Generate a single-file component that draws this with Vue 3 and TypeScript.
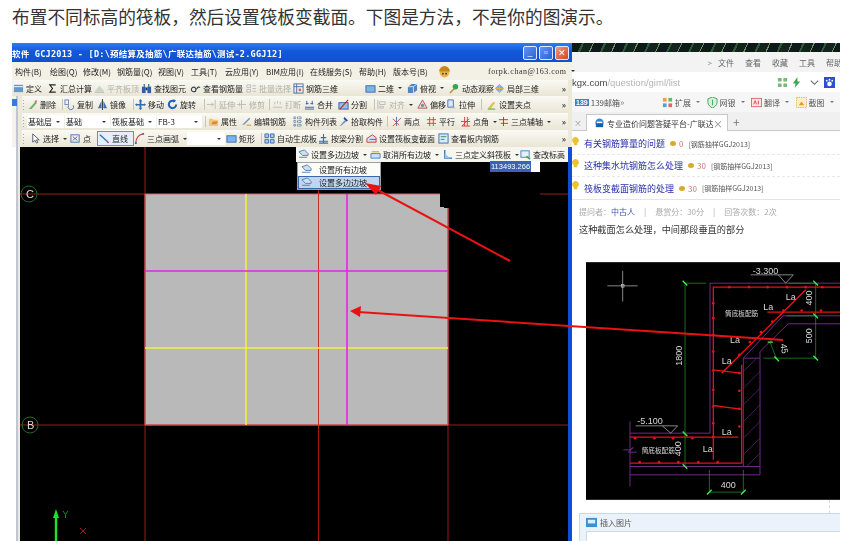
<template>
  <div class="page">
    <p class="headline">布置不同标高的筏板，然后设置筏板变截面。下图是方法，不是你的图演示。</p>

    <div class="shot">
      <!-- left: the GGJ window -->
      <div class="app-win">
        <span class="pane-tab" />
        <div class="title-bar">
          <span class="title-text">软件 GCJ2013 - [D:\预结算及抽筋\广联达抽筋\测试-2.GGJ12]</span>
          <div class="win-btns">
            <span class="win-btn">_</span>
            <span class="win-btn">▫</span>
            <span class="win-btn close">✕</span>
          </div>
        </div>

        <div class="menu-bar">
          <span v-for="m in menus" :key="m.t" class="menu-item" :style="{ width: m.w + 'px' }">{{ m.t }}</span>
          <svg class="helmet" viewBox="0 0 12 12"><circle cx="6" cy="7" r="4.5" fill="#e9b44c" /><path d="M1 6a5 5 0 0 1 10 0z" fill="#c7861c" /><circle cx="4.5" cy="8" r=".8" fill="#333" /><circle cx="7.5" cy="8" r=".8" fill="#333" /></svg>
          <span class="account">forpk.chan@163.com</span>
          <i class="caret" />
        </div>

        <div v-for="(row, r) in toolbars" :key="r" class="tb-row" :class="{ first: r === 0 }">
          <template v-for="(it, i) in row" :key="i">
            <span v-if="it.kind === 'grip'" class="grip" :style="{ width: it.w + 'px' }" />
            <span v-else-if="it.kind === 'sep'" class="sep" :style="{ width: it.w + 'px' }" />
            <span v-else-if="it.kind === 'sel'" class="sel" :style="{ width: it.w + 'px' }">
              <span class="sel-text">{{ it.t }}</span><i class="caret" />
            </span>
            <span v-else class="tb-item" :class="{ grey: it.grey, active: it.active }" :style="{ width: it.w + 'px' }">
              <svg v-if="it.i" class="ico" viewBox="0 0 12 12" v-html="icons[it.i]" />
              <span>{{ it.t }}</span>
              <i v-if="it.caret" class="caret" />
            </span>
          </template>
          <span class="more">»</span>
        </div>

        <div class="work">
          <div class="side-strip" />
          <div class="canvas">
            <svg class="cad" viewBox="20 147 548 394">
              <path d="M145 194H440V207H444V208H448V425H145Z" fill="#b9b9b9" />
              <g stroke="#a81616" stroke-width="1" fill="none">
                <path d="M20 194H145M540 194H568M20 425H568M145 147V541M318.5 147V541M448 208V541" />
              </g>
              <path d="M145 194H440M145 194V425H448V208" stroke="#e0606a" fill="none" />
              <path d="M318.5 194V425" stroke="#c8302c" fill="none" />
              <path d="M246 194V425M145 348H448" stroke="#f4ee3c" stroke-width="1.6" fill="none" />
              <path d="M347 194V425M145 271H448" stroke="#e426e0" stroke-width="1.6" fill="none" />
              <circle cx="29" cy="194" r="8" fill="none" stroke="#1d6b25" />
              <text x="26" y="198" class="axis-label">C</text>
              <circle cx="30" cy="425" r="8" fill="none" stroke="#1d6b25" />
              <text x="27" y="429" class="axis-label">B</text>
              <path d="M56 541V516" stroke="#18e52c" stroke-width="2.4" />
              <path d="M56 509L53 518H59Z" fill="#18e52c" />
              <path d="M63 511L65.500 514.500L68 511M65.500 514.500V518" stroke="#1d8a30" fill="none" />
              <path d="M80 528L86 534M86 528L80 534" stroke="#a01820" fill="none" />
            </svg>

            <!-- flyout toolbar and its menu -->
            <div class="fly-bar">
              <span v-for="f in flyItems" :key="f.t" class="tb-item" :style="{ width: f.w + 'px' }">
                <svg class="ico" viewBox="0 0 12 12" v-html="icons[f.i]" />
                <span>{{ f.t }}</span>
                <i v-if="f.caret" class="caret" />
              </span>
            </div>
            <div class="fly-menu">
              <div class="fly-opt"><svg class="ico" viewBox="0 0 12 12" v-html="icons.slope" /><span>设置所有边坡</span></div>
              <div class="fly-opt on"><svg class="ico" viewBox="0 0 12 12" v-html="icons.slope" /><span>设置多边边坡</span></div>
            </div>
            <div class="coord"><span>113493.266</span></div>
          </div>
        </div>
      </div>

      <!-- right: the browser window -->
      <div class="browser">
        <div class="wallpaper" />
        <div class="br-menu">
          <span class="chev">&gt;</span>
          <span v-for="m in browserMenu" :key="m">{{ m }}</span>
        </div>
        <div class="br-url">
          <span class="host">kgx.com</span><span class="path">/question/giml/list</span>
          <span class="url-tools">
            <svg class="ico" viewBox="0 0 12 12"><path d="M1 1h4v4H1zM7 1h4v4H7zM1 7h4v4H1zM7 7h4v4H7z" fill="#7ab77a" /></svg>
            <svg class="ico" viewBox="0 0 12 12"><path d="M7 0L2 7h3L4 12l6-7H7z" fill="#3aa655" /></svg>
            <svg class="ico wide" viewBox="0 0 12 12"><path d="M2 4l4 4 4-4" fill="none" stroke="#666" stroke-width="1.2" /></svg>
            <svg class="ico" viewBox="0 0 12 12"><rect width="12" height="12" fill="#2a4fd0" /><circle cx="6" cy="7.500" r="2.500" fill="#fff" /><circle cx="3" cy="4" r="1" fill="#fff" /><circle cx="9" cy="4" r="1" fill="#fff" /><circle cx="6" cy="3" r="1" fill="#fff" /></svg>
          </span>
        </div>
        <div class="br-favs">
          <span class="fav-logo">139</span><span class="fav-mail">139邮箱</span><span class="fav-more">»</span>
          <span v-for="f in favs" :key="f.t" class="fav">
            <svg class="ico" viewBox="0 0 12 12" v-html="icons[f.i]" />{{ f.t }}<i class="caret" />
          </span>
        </div>
        <div class="br-tabs">
          <span class="tab-x">×</span>
          <div class="tab">
            <svg class="ico" viewBox="0 0 12 12"><circle cx="6" cy="5" r="4.500" fill="#2f87d8" /><path d="M2 6h8v4H2z" fill="#1b5ea8" /><path d="M3 4h6v1.500H3z" fill="#fff" /></svg>
            <span class="tab-text">专业造价问题答疑平台-广联达</span>
            <span class="tab-close">×</span>
          </div>
          <span class="tab-plus">+</span>
        </div>

        <div class="br-body">
          <ul class="q-list">
            <li v-for="q in questions" :key="q.t" class="q-row">
              <svg class="bulb" viewBox="0 0 8 12"><path d="M4 0a4 4 0 0 1 2 7.500V10H2V7.500A4 4 0 0 1 4 0z" fill="#eec22e" /></svg>
              <span class="q-title">{{ q.t }}</span>
              <span class="coin" />
              <span class="q-score">{{ q.s }}</span>
              <span class="q-tag">[钢筋抽样GGJ2013]</span>
            </li>
          </ul>
          <div class="meta">
            <span>提问者：<b>中古人</b></span><span class="bar">|</span>
            <span>悬赏分：30分</span><span class="bar">|</span>
            <span>回答次数：2次</span>
          </div>
          <p class="question">这种截面怎么处理，中间那段垂直的部分</p>

          <svg class="drawing" viewBox="33 22 762 713">
            <rect x="33" y="22" width="762" height="713" fill="#000" />
            <g stroke="#c9c9c9" stroke-width="2" fill="none">
              <path d="M97 93H188M143 48V140" />
              <rect x="139" y="89" width="8" height="8" />
            </g>
            <!-- wall outline -->
            <g stroke="#6f2a86" stroke-width="3" fill="none">
              <path d="M795 85H405V535H165M165 500V695M145 585H165L175 578L160 592L185 592" />
              <path d="M165 635H555V290M505 310H555M505 310V635M165 660H555V635M505 310L624 183H795M555 290L639 207H795" />
              <path d="M505 350L545 310M505 400L555 350M505 450L555 400M505 500L555 450M505 550L555 500M505 600L555 550M515 635L555 595" stroke-width="2" />
            </g>
            <!-- dimensions -->
            <g stroke="#22a52c" stroke-width="2" fill="none">
              <path d="M330 85V635M330 85H393M722 85V310M640 85H722M635 183H722M565 310H722M403 645V712M505 645V712M403 712H505M585 262L605 312" />
            </g>
            <g stroke="#3cf04a" stroke-width="4" fill="none">
              <path d="M323 78L337 92M715 78L729 92M715 176L729 190M715 303L729 317M323 628L337 642M396 719L410 705M498 719L512 705M598 305L612 319M578 262H594M323 530L337 544" />
            </g>
            <!-- rebar -->
            <g stroke="#e01414" stroke-width="4" fill="none">
              <path d="M795 97H415V615M165 547H490M165 625H500V330M577 172H795M415 345L497 355M415 452L497 463" />
            </g>
            <g fill="#e01414">
              <circle v-for="d in rebarDots" :key="d[0] + '-' + d[1]" :cx="d[0]" :cy="d[1]" r="4" />
            </g>
            <path d="M440 355L692 105" stroke="#f01414" stroke-width="4" />
            <!-- levels -->
            <g stroke="#c4c4c4" stroke-width="2" fill="none">
              <path d="M527 60H655L632 85L610 60M182 513H308L287 535L262 513" />
            </g>
            <g class="dwg-text">
              <text x="533" y="57">-3.300</text>
              <text x="187" y="508">-5.100</text>
              <text x="632" y="135">La</text>
              <text x="565" y="165">La</text>
              <text x="465" y="265">La</text>
              <text x="440" y="327">La</text>
              <text x="440" y="541">La</text>
              <text x="383" y="592">La</text>
              <text x="437" y="699">400</text>
              <text x="450" y="184" class="small">筒底板配筋</text>
              <text x="200" y="595" class="small">筒底板配筋</text>
              <text transform="translate(321 333) rotate(-90)">1800</text>
              <text transform="translate(711 152) rotate(-90)">400</text>
              <text transform="translate(711 265) rotate(-90)">500</text>
              <text transform="translate(319 604) rotate(-90)">400</text>
              <text transform="translate(616 268) rotate(80)">45</text>
            </g>
          </svg>

          <div class="dash-stub" />
          <div class="insert-panel">
            <div class="insert-head">
              <svg class="ico" viewBox="0 0 12 12"><rect y="1" width="12" height="10" fill="#3c8fd4" /><rect x="2" y="3" width="8" height="4" fill="#d9eeff" /></svg>
              <span>插入图片</span>
            </div>
            <div class="insert-box" />
          </div>
        </div>
      </div>
    </div>

    <!-- hand-drawn red arrows lying over both windows -->
    <svg class="arrows" viewBox="0 0 858 541">
      <path d="M510 261L372 187" stroke="#e91212" stroke-width="2" />
      <path d="M365 183L381 186L376 195Z" fill="#e91212" />
      <path d="M783 340L358 312" stroke="#e91212" stroke-width="2" />
      <path d="M350 311L361 306L360 317Z" fill="#e91212" />
    </svg>
  </div>
</template>

<script setup lang="ts">
interface ToolItem {
  kind?: 'grip' | 'sep' | 'sel';
  i?: string;
  t?: string;
  w: number;
  caret?: boolean;
  grey?: boolean;
  active?: boolean;
}

const grip = (w: number): ToolItem => ({ kind: 'grip', w });
const sep = (w: number): ToolItem => ({ kind: 'sep', w });
const sel = (t: string, w: number): ToolItem => ({ kind: 'sel', t, w });
const btn = (i: string, t: string, w: number, extra: Partial<ToolItem> = {}): ToolItem => ({ i, t, w, ...extra });

const menus = [
  { t: '构件(B)', w: 35 }, { t: '绘图(Q)', w: 33 }, { t: '修改(M)', w: 34 }, { t: '钢筋量(Q)', w: 41 },
  { t: '视图(V)', w: 33 }, { t: '工具(T)', w: 34 }, { t: '云应用(Y)', w: 41 }, { t: 'BIM应用(I)', w: 44 },
  { t: '在线服务(S)', w: 49 }, { t: '帮助(H)', w: 34 }, { t: '版本号(B)', w: 45 },
];

const toolbars: ToolItem[][] = [
  [
    btn('def', '定义', 34), btn('sum', '汇总计算', 47), btn('align', '平齐板顶', 47, { grey: true }),
    btn('bino', '查找图元', 49), btn('rebar', '查看钢筋量', 56), btn('batch', '批量选择', 47, { grey: true }),
    btn('box', '钢筋三维', 72), btn('flat', '二维', 42, { caret: true }), btn('cube', '俯视', 42, { caret: true }),
    btn('orbit', '动态观察', 45), btn('local', '局部三维', 50),
  ],
  [
    grip(5), btn('del', '删除', 34), sep(3), btn('copy', '复制', 33), btn('mirror', '镜像', 34), sep(4),
    btn('move', '移动', 32), btn('rotate', '旋转', 35), sep(4), btn('extend', '延伸', 30, { grey: true }),
    btn('trim', '修剪', 31, { grey: true }), sep(5), btn('brk', '打断', 32, { grey: true }), btn('merge', '合并', 34),
    btn('split', '分割', 34), sep(4), btn('alignv', '对齐', 41, { grey: true, caret: true }), btn('offset', '偏移', 29),
    btn('stretch', '拉伸', 30), sep(10), btn('grippt', '设置夹点', 50),
  ],
  [
    grip(5), sel('基础层', 38), sel('基础', 46), sel('筏板基础', 46), sel('FB-3', 46), sep(5),
    btn('prop', '属性', 33), btn('edit', '编辑钢筋', 51), btn('list', '构件列表', 46), btn('pick', '拾取构件', 46), sep(7),
    btn('two', '两点', 35), btn('par', '平行', 34), btn('angle', '点角', 38, { caret: true }), btn('tri', '三点辅轴', 60, { caret: true }),
  ],
  [
    grip(8), btn('cursor', '选择', 40, { caret: true }), btn('point', '点', 27), btn('line', '直线', 37, { active: true }),
    btn('arc', '三点画弧', 53, { caret: true }), sel('', 39), btn('flat', '矩形', 32), sep(6),
    btn('auto', '自动生成板', 54), btn('beam', '按梁分割', 48), btn('section', '设置筏板变截面', 72), btn('view', '查看板内钢筋', 80),
  ],
];

const flyItems = [
  { i: 'slope', t: '设置多边边坡', w: 72, caret: true },
  { i: 'cancel', t: '取消所有边坡', w: 72, caret: true },
  { i: 'triSlab', t: '三点定义斜筏板', w: 78, caret: true },
  { i: 'elev', t: '查改标高', w: 46 },
];

const browserMenu = ['文件', '查看', '收藏', '工具', '帮助'];

const favs = [
  { i: 'ext', t: '扩展' }, { i: 'bank', t: '网银' }, { i: 'trans', t: '翻译' }, { i: 'shot', t: '截图' },
];

const questions = [
  { t: '有关钢筋算量的问题', s: 0 },
  { t: '这种集水坑钢筋怎么处理', s: 30 },
  { t: '筏板变截面钢筋的处理', s: 30 },
];

const rebarDots = [
  [463, 97], [522, 97], [578, 97], [636, 97], [692, 97], [742, 97], [415, 145], [415, 190], [415, 240], [415, 290],
  [415, 347], [415, 405], [415, 455], [415, 505], [415, 547], [238, 550], [294, 550], [352, 550], [180, 550],
  [194, 622], [252, 622], [310, 622], [370, 622], [428, 622], [493, 300], [493, 355], [493, 408], [493, 462],
  [493, 515], [625, 167], [680, 167], [738, 167], [592, 200], [558, 232], [525, 262],
];

const icons: Record<string, string> = {
  def: '<rect x="1" y="2" width="10" height="8" fill="#5b9bd5"/><path d="M1 4h10" stroke="#fff"/>',
  sum: '<path d="M9.500 2H3l3 4-3 4h6.500" fill="none" stroke="#222" stroke-width="1.200"/>',
  align: '<path d="M1 9l5-6 5 6z" fill="#c9d6c9"/><path d="M1 10h10" stroke="#aaa"/>',
  bino: '<rect x="1" y="4" width="4" height="7" fill="#2d5fa8"/><rect x="7" y="4" width="4" height="7" fill="#2d5fa8"/><path d="M3 1h1v3H3zM8 1h1v3H8zM5 5h2v3H5z" fill="#14336b"/>',
  rebar: '<circle cx="4" cy="7" r="2.500" fill="none" stroke="#345" stroke-width="1.200"/><path d="M7 7c1-3 3-3 4-2" stroke="#345" fill="none" stroke-width="1.200"/>',
  batch: '<path d="M1 2h4v3H1zM1 7h4v3H1zM7 3h4M7 6h4M7 9h4" fill="none" stroke="#bbb"/>',
  box: '<rect x="1" y="1" width="10" height="10" fill="none" stroke="#4a6ea9"/><path d="M1 4h10M4 1v10" stroke="#4a6ea9"/><circle cx="7.500" cy="7.500" r="1.500" fill="#c66"/>',
  flat: '<rect x="1" y="3" width="10" height="7" fill="#7fb2ea" stroke="#3a6db0"/>',
  cube: '<path d="M1 4l4-3h6v7l-4 3H1z" fill="#4f86c6"/><path d="M1 4h6v7M7 4l4-3" stroke="#d6e6f7" fill="none"/>',
  orbit: '<circle cx="7" cy="4" r="3" fill="#2da84a"/><path d="M1 11L6 6" stroke="#b78a2f" stroke-width="1.500"/>',
  local: '<path d="M6 1l5 5-5 5-5-5z" fill="#8ca8d8"/><path d="M6 1v10M1 6h10" stroke="#e2b34d"/>',
  del: '<path d="M2 11l7-8 2 1-6 7z" fill="#6bb46a"/><path d="M8 3l2-2 1 1-1 2z" fill="#d66"/>',
  copy: '<rect x="1" y="1" width="4" height="5" fill="none" stroke="#6a87b5"/><path d="M5 7a3 3 0 1 0 5 0" fill="none" stroke="#4a6ea9"/>',
  mirror: '<path d="M5 2v8H1zM7 2v8h4z" fill="#3f6fb0"/><path d="M6 0v12" stroke="#333"/>',
  move: '<path d="M6 0l2 2.500H7v3h3V4.500L12 6l-2 2V7H7v3h1l-2 2-2-2h1V7H2v1L0 6l2-1.500V5.500h3v-3H4z" fill="#2f70b5"/>',
  rotate: '<path d="M10 6a4 4 0 1 1-2-3.500" fill="none" stroke="#1f5fc0" stroke-width="2.200"/><path d="M7 0l3 2-3 2z" fill="#1f5fc0"/>',
  extend: '<path d="M1 6h7M10 1v10M6 4l2 2-2 2" stroke="#bbb" fill="none"/>',
  trim: '<path d="M1 6h10M6 1v10M4 4v4" stroke="#bbb" fill="none"/>',
  brk: '<path d="M1 9h10M3 3v3M6 2v3M9 3v3" stroke="#bbb" fill="none"/>',
  merge: '<path d="M1 9h10M1 11h10M3 2v4M9 2v4M2 5h3M7 5h3" stroke="#2f5fa8" fill="none"/>',
  split: '<rect x="1" y="4" width="10" height="7" fill="#9fbde3" stroke="#2f5fa8"/><path d="M2 11L11 1" stroke="#c22" stroke-width="1.200"/>',
  alignv: '<path d="M2 1v10M4 3h6v3H4zM4 8h4v2H4z" stroke="#bbb" fill="none"/>',
  offset: '<path d="M6 1l5 9H1z" fill="#f0d8d0" stroke="#b55"/><circle cx="6" cy="7" r="1.800" fill="#6a8fc0"/>',
  stretch: '<path d="M2 1h6v8H2z" fill="#dfe9f5" stroke="#4a6ea9"/><path d="M5 7l6 3H5z" fill="#8fb0d8"/>',
  grippt: '<path d="M2 10l6-7 2 1-5 7z" fill="#e8c04e"/><path d="M2 11h8" stroke="#3a3"/>',
  prop: '<path d="M1 3h4l1 1h5v7H1z" fill="#f0c878"/><path d="M5 6h6l-2 3H4z" fill="#d8863a"/>',
  edit: '<path d="M1 10l3-1 6-6-1-1-6 6z" fill="#6b8fbf"/><path d="M6 10h5" stroke="#c58b2b"/>',
  list: '<path d="M2 1h2v2H2zM2 5h2v2H2zM2 9h2v2H2zM6 1h4v2H6zM6 5h4v2H6zM6 9h4v2H6z" fill="none" stroke="#4f6f9f" stroke-dasharray="1 .5"/>',
  pick: '<path d="M2 11l5-6 2 1-6 5z" fill="#6c93c4"/><path d="M7 1l4 4-2 1-3-3z" fill="#2a4f8c"/>',
  two: '<path d="M2 11L11 2M2 3l7 7" stroke="#c44" fill="none"/><path d="M6 1v10" stroke="#4a6ea9"/>',
  par: '<path d="M4 1v10M8 1v10M1 4h10M1 8h10" stroke="#c44" fill="none"/>',
  angle: '<path d="M2 11L10 3M2 11h9M5 1v10M8 1v10" stroke="#c44" fill="none"/><path d="M1 6h10" stroke="#4a6ea9"/>',
  tri: '<path d="M6 1v10M1 4h10M3 8h8" stroke="#d22" fill="none"/>',
  cursor: '<path d="M3 1v9l2.500-2 1.500 3 1.500-.7L7 7.500h3z" fill="#fff" stroke="#556"/>',
  point: '<rect x="1" y="2" width="9" height="8" fill="none" stroke="#4a6ea9"/><path d="M3 4l5 4M8 4l-5 4" stroke="#4a6ea9"/>',
  line: '<path d="M1 2l9 8" stroke="#2f6fb5" stroke-width="1.400"/><path d="M9 10h2v1H9z" fill="#c44"/>',
  arc: '<path d="M2 11C2 6 5 2 10 1" fill="none" stroke="#c44" stroke-width="1.300"/><path d="M1 10h2v2H1zM9 0h2v2H9z" fill="#3a6db0"/>',
  auto: '<path d="M1 1h4v4H1zM7 1h4v4H7zM1 7h4v4H1zM7 7h4v4H7z" fill="#a9c4e8" stroke="#3a6db0"/>',
  beam: '<path d="M6 1v10M1 9h10M1 11h10M3 5h6" stroke="#2f6fb5" stroke-width="1.200" fill="none"/>',
  section: '<path d="M1 10V6l6-4 4 3v5z" fill="#d8e4f4" stroke="#c33"/><path d="M4 7h7" stroke="#2f6fb5"/>',
  view: '<rect x="1" y="1" width="10" height="10" fill="#dbe8f7" stroke="#3a6db0"/><path d="M3 4h6M3 7h4" stroke="#2d8f5b"/>',
  slope: '<path d="M1 3l6-2 4 4v2H5z" fill="#cfe0f4" stroke="#4a7fc0"/><path d="M1 9h9" stroke="#4a7fc0"/>',
  cancel: '<path d="M1 5h10v5H1z" fill="#cfe0f4" stroke="#4a7fc0"/><path d="M2 3l8 0" stroke="#e6b33c" stroke-width="1.500"/>',
  triSlab: '<path d="M3 1v9h8" fill="none" stroke="#2f6fb5" stroke-width="1.400"/><path d="M3 5l6 5H3z" fill="#9cc2ea"/>',
  elev: '<rect x="1" y="2" width="9" height="7" fill="#e6f0fa" stroke="#4a7fc0"/><path d="M7 8l4 3" stroke="#3a9a4a" stroke-width="1.500"/>',
  ext: '<path d="M1 1h4v4H1z" fill="#e8a33c"/><path d="M7 1h4v4H7z" fill="#6bb46a"/><path d="M1 7h4v4H1z" fill="#5b9bd5"/><path d="M7 7h4v4H7z" fill="#d66"/>',
  bank: '<path d="M6 0l5 2v4c0 3-3 5-5 6-2-1-5-3-5-6V2z" fill="#d8f0dc" stroke="#3aa655"/><path d="M6 3v6" stroke="#3aa655"/>',
  trans: '<rect x=".5" y="1.500" width="11" height="9" fill="#fbe5e5" stroke="#d66"/><path d="M3 8l1.500-4L6 8M8 4v4" stroke="#d44" fill="none"/>',
  shot: '<rect x=".5" y=".5" width="11" height="11" fill="#fbeec8" stroke="#e0b050" stroke-dasharray="1.500 1"/><path d="M3 9l3-4 3 4z" fill="#e69c2c"/>',
};
</script>

<style scoped>
.page {
  position: relative;
  width: 858px;
  height: 541px;
  overflow: hidden;
  background: #fff;
  font-family: "Liberation Sans", "Noto Sans CJK SC", sans-serif;
}

.headline {
  height: 43px;
  margin: 0;
  padding: 3px 0 0 12px;
  box-sizing: border-box;
  font-size: 17.7px;
  line-height: 26px;
  color: #333;
  font-family: "Noto Sans CJK SC", sans-serif;
  white-space: nowrap;
}

.shot {
  display: flex;
  width: 828px;
  height: 498px;
  margin-left: 12px;
  filter: blur(0.45px);
}

/* GGJ window */
.app-win {
  position: relative;
  width: 560px;
  flex: none;
  display: flex;
  flex-direction: column;
  background: linear-gradient(90deg, #f4f2ea 0 4px, #c0c6d6 4px 6px, #ece9d8 6px);
  font-family: "Noto Sans CJK SC", sans-serif;
  font-size: 8px;
  color: #222;
}

.pane-tab {
  position: absolute;
  left: 0;
  top: 56px;
  width: 5px;
  height: 7px;
  background: #2f7de0;
}

.title-bar {
  height: 19px;
  flex: none;
  display: flex;
  align-items: center;
  justify-content: space-between;
  background: linear-gradient(180deg, #2f7df0 0%, #1257d8 45%, #0f50d0 100%);
}

.title-text {
  color: #fff;
  font-size: 8.5px;
  font-weight: 700;
  letter-spacing: 0.25px;
  white-space: nowrap;
  font-family: "DejaVu Sans Mono", "Noto Sans CJK SC", monospace;
}

.win-btns {
  display: flex;
  gap: 2px;
  padding-right: 3px;
}

.win-btn {
  width: 14px;
  height: 14px;
  box-sizing: border-box;
  border: 1px solid #dfe9ff;
  border-radius: 2px;
  background: linear-gradient(135deg, #5d94f2, #2a62d8);
  color: #fff;
  font-size: 9px;
  line-height: 11px;
  text-align: center;
}

.win-btn.close {
  background: linear-gradient(135deg, #ee9a7c, #d8431c);
}

.menu-bar {
  height: 18px;
  flex: none;
  display: flex;
  align-items: center;
  padding-left: 3px;
  background: #f3f1e6;
  white-space: nowrap;
}

.menu-item {
  flex: none;
}

.helmet {
  width: 13px;
  height: 13px;
  flex: none;
}

.account {
  margin-left: 37px;
  font-family: "Liberation Serif", serif;
  font-size: 8px;
  letter-spacing: 0.5px;
  color: #333;
}

.tb-row {
  height: 17px;
  flex: none;
  display: flex;
  align-items: center;
  margin-left: 10px;
  margin-right: 4px;
  background: linear-gradient(180deg, #faf9f3, #e9e6d6);
  white-space: nowrap;
}

.tb-row.first {
  height: 16px;
  margin-left: 0;
  padding-left: 1px;
}

.tb-item {
  flex: none;
  display: flex;
  align-items: center;
  height: 15px;
  box-sizing: border-box;
}

.tb-item.grey {
  color: #b0b0a8;
}

.tb-item.active {
  background: #e6eefa;
  box-shadow: inset 0 0 0 1px #6b8fc0;
  padding-left: 2px;
}

.ico {
  width: 11px;
  height: 11px;
  flex: none;
  margin-right: 2px;
}

.caret {
  display: inline-block;
  width: 0;
  height: 0;
  margin-left: 4px;
  border-left: 2px solid transparent;
  border-right: 2px solid transparent;
  border-top: 2px solid #333;
}

.grip {
  flex: none;
  height: 11px;
  background: radial-gradient(circle, #aaa 0.6px, transparent 0.8px) 0 0 / 3px 3px repeat-y;
}

.sep {
  flex: none;
  height: 11px;
  background: linear-gradient(#c8c5b4, #c8c5b4) center / 1px 100% no-repeat;
}

.sel {
  flex: none;
  display: flex;
  align-items: center;
  justify-content: space-between;
  height: 13px;
  padding-right: 4px;
  box-sizing: border-box;
  background: #fff;
  border-right: 1px solid #f1efe4;
}

.sel-text {
  padding-left: 1px;
}

.more {
  margin-left: auto;
  padding-right: 2px;
  font-size: 8px;
  font-weight: 700;
  color: #333;
}

.work {
  flex: 1;
  min-height: 0;
  display: flex;
  background: #fff;
}

.side-strip {
  width: 4px;
  margin-left: 4px;
  flex: none;
  background: linear-gradient(90deg, #c0c6d6 0 2px, #ece9d8 2px);
}

.canvas {
  position: relative;
  flex: 1;
  background: #000;
  border-right: 4px solid #0d4fd8;
}

.cad {
  display: block;
  width: 548px;
  height: 394px;
}

.axis-label {
  font-family: "Liberation Sans", sans-serif;
  font-size: 11px;
  fill: #ddd;
}

.fly-bar {
  position: absolute;
  left: 276px;
  top: 0;
  display: flex;
  align-items: center;
  width: 272px;
  height: 15px;
  padding-left: 2px;
  box-sizing: border-box;
  background: #f6f5ee;
  white-space: nowrap;
}

.fly-menu {
  position: absolute;
  left: 277px;
  top: 15px;
  width: 84px;
  height: 28px;
  background: #fbfbf7;
  border: 1px solid #9aa0a8;
  box-sizing: border-box;
}

.fly-opt {
  display: flex;
  align-items: center;
  height: 13px;
  padding-left: 3px;
}

.fly-opt .ico {
  margin-right: 7px;
}

.fly-opt.on {
  background: #c2d5f0;
  box-shadow: inset 0 0 0 1px #3b66a8;
}

.coord {
  position: absolute;
  left: 470px;
  top: 14px;
  width: 50px;
  height: 11px;
  background: #fff;
  font-family: "Liberation Sans", sans-serif;
  font-size: 7.5px;
  line-height: 11px;
}

.coord span {
  display: inline-block;
  background: #3c62b4;
  color: #fff;
  padding: 0 1px;
}

/* browser */
.browser {
  flex: 1;
  min-width: 0;
  display: flex;
  flex-direction: column;
  overflow: hidden;
  font-family: "Noto Sans CJK SC", sans-serif;
  color: #444;
  background: #fff;
}

.wallpaper {
  height: 9px;
  flex: none;
  background: repeating-linear-gradient(115deg, #0d1a18 0 9px, #2e5a3a 9px 11px, #12241c 11px 19px, #6f8f6a 19px 20px);
}

.br-menu {
  height: 20px;
  flex: none;
  display: flex;
  align-items: center;
  justify-content: flex-end;
  gap: 11px;
  padding-right: 1px;
  margin-right: -3px;
  box-sizing: border-box;
  background: #f3f3f3;
  font-size: 8px;
  color: #666;
  white-space: nowrap;
}

.chev {
  margin-right: -5px;
  color: #888;
}

.br-url {
  height: 20px;
  flex: none;
  display: flex;
  align-items: center;
  background: #fff;
  font-family: "Liberation Sans", sans-serif;
  font-size: 9.5px;
  white-space: nowrap;
}

.host {
  color: #444;
}

.path {
  color: #b5b5b5;
}

.url-tools {
  margin-left: auto;
  display: flex;
  align-items: center;
  gap: 1px;
  margin-right: 3px;
}

.url-tools .wide {
  margin: 0 3px 0 4px;
}

.br-favs {
  height: 20px;
  flex: none;
  display: flex;
  align-items: center;
  padding-left: 3px;
  background: #f6f6f6;
  font-size: 8px;
  color: #555;
  white-space: nowrap;
}

.fav-logo {
  font-family: "Liberation Sans", sans-serif;
  font-weight: 700;
  font-size: 7px;
  color: #fff;
  background: #3b7fd4;
  padding: 0 1px;
  margin-right: 2px;
}

.fav-mail {
  width: 34px;
}

.fav-more {
  width: 51px;
  font-size: 9px;
  color: #888;
}

.fav {
  flex: none;
  width: 44.500px;
  display: flex;
  align-items: center;
}

.fav .caret {
  margin-left: 5px;
  border-top-color: #777;
}

.br-tabs {
  height: 18px;
  flex: none;
  display: flex;
  align-items: flex-end;
  background: #f0f0f0;
  border-bottom: 1px solid #c8c8c8;
  font-size: 8px;
}

.tab-x {
  width: 14px;
  padding-left: 2px;
  box-sizing: border-box;
  color: #999;
  line-height: 14px;
}

.tab {
  width: 142px;
  height: 17px;
  flex: none;
  display: flex;
  align-items: center;
  box-sizing: border-box;
  margin-bottom: -1px;
  padding-left: 7px;
  background: #fff;
  border: 1px solid #c8c8c8;
  border-bottom: none;
  color: #333;
  white-space: nowrap;
}

.tab-text {
  flex: 1;
  min-width: 0;
  overflow: hidden;
}

.tab-close {
  width: 14px;
  color: #888;
  font-size: 10px;
}

.tab-plus {
  padding-left: 5px;
  color: #777;
  font-size: 12px;
  line-height: 16px;
}

.br-body {
  flex: 1;
  min-height: 0;
  display: flex;
  flex-direction: column;
  font-size: 8px;
}

.q-list {
  list-style: none;
  margin: 0;
  padding: 2px 0 0;
  border-bottom: 1px solid #e4e4e4;
}

.q-row {
  display: flex;
  align-items: center;
  height: 22px;
  box-sizing: border-box;
  border-bottom: 1px dashed #e8e8e8;
  white-space: nowrap;
}

.q-row:last-child {
  border-bottom: none;
}

.bulb {
  width: 7px;
  height: 10px;
  flex: none;
  margin: 0 5px 4px 0;
}

.q-title {
  font-size: 9px;
  color: #2a2fa8;
}

.coin {
  width: 6px;
  height: 5px;
  margin: 0 3px 0 5px;
  flex: none;
  border-radius: 50%;
  background: #d9a92a;
}

.q-score {
  color: #c77;
  margin-right: 5px;
}

.q-tag {
  font-size: 7px;
  color: #555;
}

.meta {
  height: 22px;
  flex: none;
  display: flex;
  align-items: center;
  padding-left: 7px;
  color: #aaa;
  white-space: nowrap;
}

.meta b {
  font-weight: 400;
  color: #3a55a8;
}

.bar {
  margin: 0 9px;
}

.question {
  margin: 1px 0 0;
  height: 13px;
  flex: none;
  padding-left: 7px;
  font-size: 9.200px;
  line-height: 13px;
  color: #333;
  white-space: nowrap;
}

.drawing {
  display: block;
  flex: none;
  width: 254px;
  height: 238px;
  margin: 26px 0 0 14px;
}

.dwg-text text {
  fill: #d8d8d8;
  font-family: "Liberation Sans", "Noto Sans CJK SC", sans-serif;
  font-size: 27px;
}

.dwg-text text.small {
  font-family: "Noto Sans CJK SC", sans-serif;
  font-size: 20px;
}

.dash-stub {
  height: 13px;
  flex: none;
  width: 11px;
  margin-left: auto;
  box-sizing: border-box;
  border-left: 1px dashed #ddd;
}

.insert-panel {
  flex: 1;
  margin-left: 7px;
  min-height: 0;
  padding-left: 6px;
  background: #eaf3fc;
  border-top: 1px solid #c4d8ef;
  border-left: 1px solid #c4d8ef;
}

.insert-head {
  display: flex;
  align-items: center;
  height: 17px;
  font-size: 8px;
  color: #555;
}

.insert-head .ico {
  margin-right: 3px;
}

.insert-box {
  height: 12px;
  background: #fff;
  border: 1px solid #cfd8e6;
  border-right: none;
}

.arrows {
  position: absolute;
  left: 0;
  top: 0;
  width: 858px;
  height: 541px;
  pointer-events: none;
}
</style>

<style>
html,
body {
  background: #fff;
  overflow: hidden;
}
</style>
